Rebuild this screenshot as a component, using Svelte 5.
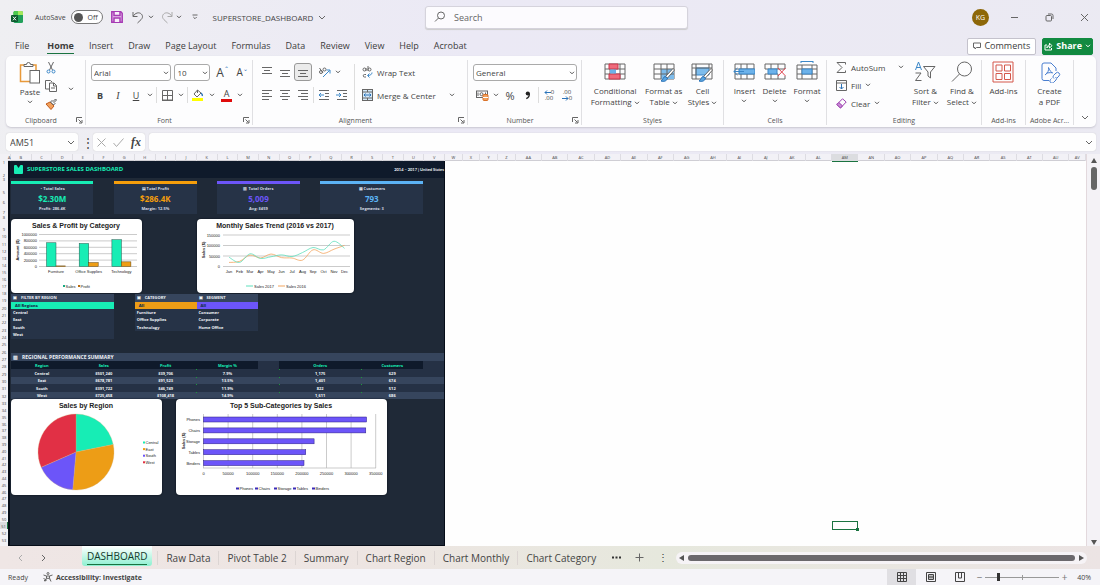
<script>
	const menus = ['File', 'Home', 'Insert', 'Draw', 'Page Layout', 'Formulas', 'Data', 'Review', 'View', 'Help', 'Acrobat'];
	const sheets = ['DASHBOARD', 'Raw Data', 'Pivot Table 2', 'Summary', 'Chart Region', 'Chart Monthly', 'Chart Category'];

	let activeMenu = $state('Home');
	let activeSheet = $state('DASHBOARD');
	let zoom = $state(40);

	const dashCols = 'BCDEFGHIJKLMNOPQRSTUV'.split('');
	const midCols = 'WXYZ'.split('');
	const farCols = 'ABCDEFGHIJKLMNOPQRSTUV'.split('').map((c) => 'A' + c);

	// Row heights in pixels, row 1 first
	const rows = [
		4, 13, 4, 3, 10, 10, 10, 5, 12, 7, 8, 7, 7, 7, 7, 7, 7, 7,
		7, 8, 7, 7, 8, 7, 7, 8, 7, 7, 8, 7, 7, 8,
		7, 7, 7, 7, 6, 7, 7, 7, 7, 6, 7, 7, 7, 7, 6, 7, 7, 7, 7, 7, 7, 3
	];
	const rowTemplate = rows.map((h) => h + 'px').join(' ');

	const kpis = [
		{ name: 'sales', icon: '◔', label: 'Total Sales', value: '$2.30M', note: 'Profit: 286.4K' },
		{ name: 'profit', icon: '▤', label: 'Total Profit', value: '$286.4K', note: 'Margin: 12.5%' },
		{ name: 'orders', icon: '▥', label: 'Total Orders', value: '5,009', note: 'Avg: $459' },
		{ name: 'customers', icon: '▦', label: 'Customers', value: '793', note: 'Segments: 3' }
	];

	const filters = [
		{ name: 'region', title: 'FILTER BY REGION', all: 'All Regions', items: ['Central', 'East', 'South', 'West'] },
		{ name: 'category', title: 'CATEGORY', all: 'All', items: ['Furniture', 'Office Supplies', 'Technology'] },
		{ name: 'segment', title: 'SEGMENT', all: 'All', items: ['Consumer', 'Corporate', 'Home Office'] }
	];

	const regions = [
		['Central', '$501,240', '$39,706', '7.9%', '1,175', '629'],
		['East', '$678,781', '$91,523', '13.5%', '1,401', '674'],
		['South', '$391,722', '$46,749', '11.9%', '822', '512'],
		['West', '$725,458', '$108,418', '14.9%', '1,611', '686']
	];

	const categories = [
		{ name: 'Furniture', sales: 742000, profit: 18451 },
		{ name: 'Office Supplies', sales: 719047, profit: 122491 },
		{ name: 'Technology', sales: 836154, profit: 145455 }
	];

	const months = ['Jan', 'Feb', 'Mar', 'Apr', 'May', 'Jun', 'Jul', 'Aug', 'Sep', 'Oct', 'Nov', 'Dec'];
	const sales2017 = [42, 17, 58, 36, 44, 53, 45, 64, 88, 77, 118, 84];
	const sales2016 = [17, 22, 52, 38, 57, 40, 38, 28, 77, 60, 80, 98];

	const subCategories = [
		['Phones', 330007],
		['Chairs', 328449],
		['Storage', 223844],
		['Tables', 206966],
		['Binders', 203413]
	];

	const shares = [
		{ name: 'Central', value: 501240, color: '#17edb5' },
		{ name: 'East', value: 678781, color: '#ed9d16' },
		{ name: 'South', value: 391722, color: '#6c55f9' },
		{ name: 'West', value: 725458, color: '#e13045' }
	];

	function smooth(values) {
		const pts = values.map((v, i) => [32 + i * 10.5, 47 - v * 0.21]);
		let d = `M${pts[0]}`;
		for (let i = 1; i < pts.length; i++) {
			const a = pts[i - 2] ?? pts[i - 1];
			const b = pts[i - 1];
			const c = pts[i];
			const e = pts[i + 1] ?? c;
			d += `C${b[0] + (c[0] - a[0]) / 6},${b[1] + (c[1] - a[1]) / 6} ${c[0] - (e[0] - b[0]) / 6},${c[1] - (e[1] - b[1]) / 6} ${c[0]},${c[1]}`;
		}
		return d;
	}

	function pieSlices() {
		const total = shares.reduce((sum, s) => sum + s.value, 0);
		let start = 0;
		return shares.map((s) => {
			const end = start + (s.value / total) * Math.PI * 2;
			const p = (a) => `${65 + 38 * Math.sin(a)},${53 - 38 * Math.cos(a)}`;
			const d = `M65,53L${p(start)}A38,38 0 0 1 ${p(end)}Z`;
			start = end;
			return { d, color: s.color };
		});
	}
</script>

{#snippet chevron()}
	<svg class="chev" width="6" height="4" viewBox="0 0 6 4"><path d="M1 .8l2 2 2-2" /></svg>
{/snippet}

{#snippet lines(a, b, c, d)}
	<svg width="12" height="12" viewBox="0 0 12 12" class="line">
		{#each [a, b, c, d] as l, i}
			{#if l}<path d="M{l[0]} {1.5 + i * 3}H{l[1]}" />{/if}
		{/each}
	</svg>
{/snippet}

{#snippet launcher()}
	<button class="launcher" aria-label="More options">
		<svg width="7" height="7" viewBox="0 0 7 7" class="line"><path d="M.5 5V.5H6M2.5 2.5l3 3M6 3v3H3" /></svg>
	</button>
{/snippet}

<div class="app">
	<header class="titlebar">
		<div class="quick">
			<svg class="logo" width="12" height="12" viewBox="0 0 12 12">
				<rect x="2.500" width="9.500" height="12" rx="1.500" fill="#21a05a" />
				<path d="M7 0h3.500A1.500 1.500 0 0 1 12 1.500V4H7z" fill="#a4e85c" />
				<path d="M2.500 1.500A1.500 1.500 0 0 1 4 0h3v4H2.500z" fill="#4cc94e" />
				<rect x="0" y="4" width="7" height="7" rx="1" fill="#0c5a2e" />
				<path d="M2 5.700l3 3.600M5 5.700L2 9.300" stroke="#fff" stroke-width="1" />
			</svg>
			<span class="autosave">AutoSave</span>
			<button class="toggle" aria-label="AutoSave"><i></i>Off</button>
			<button class="save" aria-label="Save">
				<svg width="12" height="12" viewBox="0 0 12 12" fill="none" stroke="#a63bb4" stroke-width="1.500">
					<path d="M.8.8h9l1.400 1.400v9H.8z" fill="#e9c4ee" /><path d="M3 1v3.500h6V1M3 11V7h6v4" fill="#f8eefa" />
				</svg>
			</button>
			<button class="undo" aria-label="Undo">
				<svg width="12" height="13" viewBox="0 0 12 13" class="line"><path d="M1 1v4.500h4.500M1.200 5.200C3 2 7 .7 9.300 3c2 2 1.200 4.200-.3 5.700L5.500 12" /></svg>
			</button>
			{@render chevron()}
			<button class="redo" aria-label="Redo">
				<svg width="12" height="13" viewBox="0 0 12 13" class="line pale"><path d="M11 1v4.500H6.500M10.800 5.200C9 2 5 .7 2.700 3c-2 2-1.200 4.200.3 5.700L6.500 12" /></svg>
			</button>
			{@render chevron()}
			<svg class="customize line" width="6" height="6" viewBox="0 0 6 6"><path d="M.5 1h5M1.300 3L3 4.700 4.700 3" /></svg>
			<span class="filename">SUPERSTORE_DASHBOARD</span>
			<svg class="line" width="8" height="5" viewBox="0 0 8 5"><path d="M1 1l3 3 3-3" /></svg>
		</div>
		<label class="search">
			<svg width="12" height="12" viewBox="0 0 12 12" class="line"><circle cx="7" cy="4.500" r="3.500" /><path d="M4.500 7L1 10.500" /></svg>
			<input type="text" placeholder="Search" aria-label="Search" />
		</label>
		<div class="window">
			<span class="avatar">KG</span>
			<button aria-label="Minimize"><svg width="9" height="9" viewBox="0 0 9 9" class="line"><path d="M1 4.500h7" /></svg></button>
			<button aria-label="Restore"><svg width="9" height="9" viewBox="0 0 9 9" class="line"><rect x="1" y="2.500" width="5.500" height="5.500" rx="1" /><path d="M3 1h3.500A1.500 1.500 0 0 1 8 2.500V6" /></svg></button>
			<button aria-label="Close"><svg width="9" height="9" viewBox="0 0 9 9" class="line"><path d="M1 1l7 7M8 1L1 8" /></svg></button>
		</div>
	</header>

	<nav class="menus">
		{#each menus as menu}
			<button class:active={menu === activeMenu} onclick={() => (activeMenu = menu)}>{menu}</button>
		{/each}
		<span class="grow"></span>
		<button class="comments">
			<svg width="8" height="8" viewBox="0 0 8 8" class="line"><path d="M.5 1h7v4.500h-4L2 7V5.500H.5z" /></svg>
			Comments
		</button>
		<button class="share">
			<svg width="9" height="9" viewBox="0 0 9 9" class="line"><path d="M3 3H1v5h6.500V6M2.800 6C3 4 4 3.200 5.500 3.200V1.200L8 3.700 5.500 6V4.500C4.300 4.500 3.500 5 2.800 6z" /></svg>
			Share
			{@render chevron()}
		</button>
	</nav>

	<section class="ribbon">
		<div class="group">
			<div class="body clipboard">
				<button class="big">
					<svg width="22" height="22" viewBox="0 0 22 22" fill="none">
						<path d="M5 3H1.500v16.500H11M14 3h3v5" stroke="#e8993a" stroke-width="1.500" />
						<path d="M5 4.500V2.500h2.500a2 2 0 0 1 4 0H14v2z" stroke="#666" />
						<rect x="11" y="8.500" width="9.500" height="12.500" stroke="#666" fill="#fff" />
					</svg>
					<span>Paste</span>
					{@render chevron()}
				</button>
				<div class="stack">
					<button aria-label="Cut"><svg width="10" height="12" viewBox="0 0 10 12" class="line"><path d="M2.500 0l4 8M7.500 0l-4 8" /><g stroke="#3b87c8"><circle cx="2.500" cy="9.500" r="1.500" /><circle cx="7.500" cy="9.500" r="1.500" /></g></svg></button>
					<button aria-label="Copy"><svg width="12" height="12" viewBox="0 0 12 12" class="line"><path d="M4 9H.5V.5h5L7 2" /><path d="M4.500 3h4.500l2.500 2.500v6h-7zM8.500 3v3h3M6 8h4" /></svg></button>
					<button aria-label="Format Painter"><svg width="12" height="12" viewBox="0 0 12 12" fill="none"><path d="M1 6l4-2 4 4-3 3.500z" fill="#f3a15c" stroke="#c05a1a" /><path d="M5.500 4L7 2.500l1 1L10.500 1l1 1L9 4.500l1 1L8.500 7z" stroke="#555" fill="#fff" /></svg></button>
				</div>
				<span class="copymore">{@render chevron()}</span>
			</div>
			<footer><span>Clipboard</span>{@render launcher()}</footer>
		</div>

		<div class="group">
			<div class="body two">
				<div class="tools">
					<span class="picker fonts"><select aria-label="Font"><option>Arial</option></select>{@render chevron()}</span>
					<span class="picker size"><select aria-label="Font size"><option>10</option></select>{@render chevron()}</span>
					<button class="tool letter">A<sup>⌃</sup></button>
					<button class="tool letter small">A<sup>⌄</sup></button>
				</div>
				<div class="tools">
					<button class="tool"><b>B</b></button>
					<button class="tool"><i class="serif">I</i></button>
					<button class="tool"><u>U</u></button>
					<span class="arrow">{@render chevron()}</span>
					<span class="sep"></span>
					<button class="tool" aria-label="Borders"><svg width="11" height="11" viewBox="0 0 11 11" class="line"><path d="M.5.5h10v9.500H.5zM5.500.5V10M.5 5.500h10M0 10.500h11" /></svg></button>
					<span class="arrow">{@render chevron()}</span>
					<span class="sep"></span>
					<button class="tool" aria-label="Fill Color"><svg width="12" height="12" viewBox="0 0 12 12" class="line"><path d="M5.500 1L2 5l3 3 4-4zM5.500 1v3" /><path d="M9 4c1.500 1 1.500 2 1.300 3" stroke="#2b73b8" stroke-width="1.500" /><path d="M0 10.500h11" stroke="#ff0" stroke-width="3" /></svg></button>
					<span class="arrow">{@render chevron()}</span>
					<button class="tool fontcolor">A</button>
					<span class="arrow">{@render chevron()}</span>
				</div>
			</div>
			<footer><span>Font</span>{@render launcher()}</footer>
		</div>

		<div class="group">
			<div class="body align">
				<div class="two">
					<div class="tools">
						<button class="tool" aria-label="Top Align">{@render lines([1, 11], [3, 9], [1, 11], null)}</button>
						<button class="tool" aria-label="Middle Align">{@render lines(null, [1, 11], [3, 9], [1, 11])}</button>
						<button class="tool pressed" aria-label="Bottom Align">{@render lines(null, [1, 11], [3, 9], [1, 11])}</button>
						<button class="tool orient" aria-label="Orientation"><svg width="13" height="12" viewBox="0 0 13 12" class="line"><circle cx="3" cy="6" r="1.500" /><path d="M1.500 2l3.500 5" /><circle cx="6.500" cy="3.500" r="1.500" /><path d="M5 11l6.500-6.500M8.500 4h3.500v3.500" stroke="#3b87c8" /></svg></button>
						<span class="arrow">{@render chevron()}</span>
					</div>
					<div class="tools">
						<button class="tool" aria-label="Align Left">{@render lines([1, 11], [1, 8], [1, 11], [1, 8])}</button>
						<button class="tool" aria-label="Center">{@render lines([1, 11], [3, 9], [1, 11], [3, 9])}</button>
						<button class="tool" aria-label="Align Right">{@render lines([1, 11], [4, 11], [1, 11], [4, 11])}</button>
						<span class="sep"></span>
						<button class="tool" aria-label="Decrease Indent"><svg width="12" height="12" viewBox="0 0 12 12" class="line"><path d="M1 1.500h10M7 4.500h4M7 7.500h4M1 10.500h10" /><path d="M6 6H1M3 4L1 6l2 2" stroke="#3b87c8" /></svg></button>
						<button class="tool" aria-label="Increase Indent"><svg width="12" height="12" viewBox="0 0 12 12" class="line"><path d="M1 1.500h10M7 4.500h4M7 7.500h4M1 10.500h10" /><path d="M0 6h5M3 4l2 2-2 2" stroke="#3b87c8" /></svg></button>
					</div>
				</div>
				<span class="sep"></span>
				<div class="two wide">
					<button class="row">
						<svg width="11" height="12" viewBox="0 0 11 12" class="line"><circle cx="2.500" cy="3.500" r="1.500" /><path d="M4 2v3M6 0v5M4 8.500H2.500a1.200 1.200 0 0 0 0 2.500H4" /><circle cx="7.500" cy="3.500" r="1.500" /><path d="M10 6.500c0 2-2 3-4 3M7.500 7.500l-2 2 2 2" stroke="#3b87c8" /></svg>
						Wrap Text
					</button>
					<button class="row">
						<svg width="11" height="12" viewBox="0 0 11 12" class="line"><rect x=".5" y=".5" width="10" height="11" fill="#d5e9f9" /><path d="M.5 3h10M.5 9h10M5.500.5V3M5.500 9v2.500" /><path d="M2 6h7M3.500 4.500L2 6l1.500 1.500M7.500 4.500L9 6 7.500 7.500" stroke="#2b73b8" /></svg>
						Merge &amp; Center <span class="grow"></span>{@render chevron()}
					</button>
				</div>
			</div>
			<footer><span>Alignment</span>{@render launcher()}</footer>
		</div>

		<div class="group">
			<div class="body two">
				<div class="tools">
					<span class="picker format"><select aria-label="Number format"><option>General</option></select>{@render chevron()}</span>
				</div>
				<div class="tools">
					<button class="tool" aria-label="Accounting"><svg width="13" height="11" viewBox="0 0 13 11" class="line"><rect x=".5" y="1" width="11" height="6.500" /><circle cx="5.500" cy="4.200" r="1.500" /><path d="M2 2.500v3.500M9.500 2.500V4" /><rect x="7" y="4.500" width="5" height="6" rx="1" fill="#f3a15c" stroke="#d9722a" /><path d="M7 7.500h5" stroke="#fff" /></svg></button>
					<span class="arrow">{@render chevron()}</span>
					<button class="tool percent">%</button>
					<button class="tool" aria-label="Comma Style"><svg width="6" height="9" viewBox="0 0 6 9"><circle cx="2.800" cy="2.500" r="2.100" fill="#222" /><path d="M4.300 2.500c.3 2.500-1 4.200-3 5.200" fill="none" stroke="#222" stroke-width="1.300" /></svg></button>
					<span class="sep"></span>
					<button class="tool decimal"><span><svg width="7" height="5" viewBox="0 0 7 5"><path d="M7 2.500H1M3 .5l-2 2 2 2" /></svg>0</span><span>.00</span></button>
					<button class="tool decimal"><span>.00</span><span><svg width="7" height="5" viewBox="0 0 7 5"><path d="M0 2.500h6M4 .5l2 2-2 2" /></svg>0</span></button>
				</div>
			</div>
			<footer><span>Number</span>{@render launcher()}</footer>
		</div>

		<div class="group">
			<div class="body styles">
				<button class="big">
					<svg width="22" height="22" viewBox="0 0 22 22" class="line"><path d="M1 3h20v15H1zM1 8h20M1 13h20M6 3v15M11 3v15M16 3v15" /><path d="M5 3h9v5H5zM5 13h11v5H5z" fill="#ee6b7c" stroke="#c9374c" /><path d="M6 8.500h6v4H6z" fill="#6cb2ea" stroke="none" /></svg>
					<span>Conditional</span><span>Formatting {@render chevron()}</span>
				</button>
				<button class="big">
					<svg width="22" height="22" viewBox="0 0 22 22" class="line"><path d="M1 3h20v15H1z" /><path d="M8 8h13v10H8z" fill="#7dbcec" stroke="none" /><path d="M1 8h20M1 13h20M8 3v15M14 3v15" /><path d="M20 7.500l-7.500 8 2 1.500L21.500 9z" fill="#fff" /><path d="M12 15.500c-2 .5-1.500 3-4 4.500 3 1 6 0 6.500-3z" fill="#5aa5e0" stroke="#2b73b8" /></svg>
					<span>Format as</span><span>Table {@render chevron()}</span>
				</button>
				<button class="big">
					<svg width="22" height="22" viewBox="0 0 22 22" class="line"><path d="M1 3h20v15H1z" /><path d="M5 7h13v7H5z" fill="#7dbcec" stroke="#3b87c8" /><path d="M1 7h20M5 3v15M18 3v4M1 14h4" /><path d="M20 7.500l-7.500 8 2 1.500L21.500 9z" fill="#fff" /><path d="M12 15.500c-2 .5-1.500 3-4 4.500 3 1 6 0 6.500-3z" fill="#5aa5e0" stroke="#2b73b8" /></svg>
					<span>Cell</span><span>Styles {@render chevron()}</span>
				</button>
			</div>
			<footer><span>Styles</span></footer>
		</div>

		<div class="group">
			<div class="body cells">
				<button class="big">
					<svg width="22" height="22" viewBox="0 0 22 22" class="line"><path d="M2 3h19v15H2zM2 8h19M2 13h19M8 3v15M14 3v15" /><path d="M6 8h16v5H6z" fill="#6cb2ea" stroke="#3b87c8" /><path d="M11 10.500H.8M4.500 7l-3.700 3.500L4.500 14" stroke="#3b87c8" /></svg>
					<span>Insert</span>{@render chevron()}
				</button>
				<button class="big">
					<svg width="22" height="22" viewBox="0 0 22 22" class="line"><path d="M1 8V3h20v5M1 13v5h20v-3M1 8h20M1 13h13M7 3v5M14 3v5M7 13v5M14 13v5" /><path d="M4 8h9v5H4z" fill="#6cb2ea" stroke="#3b87c8" /><path d="M14 7l7.500 8M21.500 7L14 15" stroke="#e0434f" /></svg>
					<span>Delete</span>{@render chevron()}
				</button>
				<button class="big">
					<svg width="22" height="22" viewBox="0 0 22 22" class="line"><path d="M1 4h20v14H1zM1 8h20M1 13h20M6 4v14M16 4v14" /><path d="M6 8h10v5H6z" fill="#6cb2ea" stroke="#3b87c8" /><path d="M5 .5h12M5 0v2M17 0v2" stroke="#3b87c8" /></svg>
					<span>Format</span>{@render chevron()}
				</button>
			</div>
			<footer><span>Cells</span></footer>
		</div>

		<div class="group">
			<div class="body editing">
				<div class="edits">
					<button class="row"><svg width="11" height="11" viewBox="0 0 11 11" class="line"><path d="M9.500 2.500V.5H1l5 5-5 5h8.500v-2" /></svg>AutoSum<span class="grow"></span>{@render chevron()}</button>
					<button class="row"><svg width="11" height="11" viewBox="0 0 11 11" class="line"><path d="M.5.500h10v10H.5zM.5 3h10" /><path d="M5.500 4v5M3.500 7l2 2 2-2" stroke="#2b73b8" /></svg>Fill {@render chevron()}</button>
					<button class="row"><svg width="11" height="11" viewBox="0 0 11 11" fill="none" stroke="#9b3fae"><path d="M.8 6.500L6.500.800l3.700 3.200-5.700 6z" /><path d="M.8 6.500l2-2 3.700 3.300-2 2.200z" fill="#c98bd6" /></svg>Clear {@render chevron()}</button>
				</div>
				<button class="big">
					<svg width="22" height="22" viewBox="0 0 22 22" class="line"><path d="M1.500 9L4.500 1l3 8M2.500 6.500h4" stroke="#3b87c8" /><path d="M1.500 12H7l-5.500 7.500H7.500M9.500 5.500h11.500l-4.500 5.500v6l-2.500-2v-4z" /></svg>
					<span>Sort &amp;</span><span>Filter {@render chevron()}</span>
				</button>
				<button class="big">
					<svg width="22" height="22" viewBox="0 0 22 22" class="line"><circle cx="13.500" cy="8" r="7" /><path d="M8.500 13L1 20.500" /></svg>
					<span>Find &amp;</span><span>Select {@render chevron()}</span>
				</button>
			</div>
			<footer><span>Editing</span></footer>
		</div>

		<div class="group">
			<div class="body single">
				<button class="big">
					<svg width="22" height="22" viewBox="0 0 22 22" fill="none" stroke="#d4574a"><path d="M1 1h20v20H1zM4 4h6v6H4zM12.500 4h6v6h-6zM4 12.500h6v6H4zM12.500 12.500h6v6h-6z" /></svg>
					<span>Add-ins</span>
				</button>
			</div>
			<footer><span>Add-ins</span></footer>
		</div>

		<div class="group">
			<div class="body single">
				<button class="big">
					<svg width="22" height="22" viewBox="0 0 22 22" fill="none" stroke="#4a7fd0"><path d="M10 19.500H5a2 2 0 0 1-2-2V4a2 2 0 0 1 2-2h7l5 5v3" /><path d="M6 14c3-2 4-5 3.500-7.500C11 10 12.500 12 14 12M7 12.500c2-.8 4-1 6-.8" /><path d="M12.500 17.500l-1 1a2 2 0 0 0 3 3l2.500-2.500a2 2 0 0 0-.5-3M18 17l2-2a2 2 0 0 0-3-3L14.500 14.500a2 2 0 0 0 .5 3" /></svg>
					<span>Create</span><span>a PDF</span>
				</button>
			</div>
			<footer><span>Adobe Acr...</span></footer>
		</div>

		<button class="collapse" aria-label="Collapse ribbon"><svg width="8" height="5" viewBox="0 0 8 5" class="line"><path d="M1 1l3 3 3-3" /></svg></button>
	</section>

	<div class="formulabar">
		<div class="namebox">
			<input value="AM51" aria-label="Name Box" />
			<svg width="8" height="5" viewBox="0 0 8 5" class="line"><path d="M1 1l3 3 3-3" /></svg>
		</div>
		<span class="dots">⋮</span>
		<div class="fx">
			<svg width="9" height="9" viewBox="0 0 9 9" class="line pale"><path d="M.5.5l8 8M8.500.5l-8 8" /></svg>
			<svg width="11" height="9" viewBox="0 0 11 9" class="line pale"><path d="M.5 5l3 3.500 7-8" /></svg>
			<em>fx</em>
		</div>
		<div class="formula">
			<input value="" aria-label="Formula" />
			<svg width="8" height="5" viewBox="0 0 8 5" class="line"><path d="M1 1l3 3 3-3" /></svg>
		</div>
	</div>

	<main class="sheet">
		<div class="rowheads">
			<span class="corner"></span>
			{#each rows as h, i}
				<span class:picked={i === 50} style:height="{h}px">{h > 3 ? i + 1 : ''}</span>
			{/each}
		</div>

		<div class="left">
			<div class="colheads">
				<span class="a">A</span>
				{#each dashCols as c}<span>{c}</span>{/each}
			</div>
			<div class="dashboard">
				<header>
					<svg width="9" height="9" viewBox="0 0 9 9"><rect width="9" height="9" rx="1" fill="#17edb5" /><path d="M2.500 0l2 3 2-3" fill="#0f1a2b" /></svg>
					<h1>SUPERSTORE SALES DASHBOARD</h1>
					<span>2014 – 2017 | United States</span>
				</header>

				<div class="kpis">
					{#each kpis as k}
						<div class="kpi {k.name}">
							<small>{k.icon} {k.label}</small>
							<strong>{k.value}</strong>
							<small>{k.note}</small>
						</div>
					{/each}
				</div>

				<div class="charts top">
					<svg class="chart" width="131" height="74" viewBox="0 0 131 74">
						<text class="title" x="65" y="9">Sales &amp; Profit by Category</text>
						<text class="axis" text-anchor="middle" transform="translate(8 31) rotate(-90)">Amount ($)</text>
						{#each [0, 1, 2, 3, 4, 5] as t}
							<path class="rule" d="M28 {47.5 - t * 6.4}h98" />
							<text x="26" y={49 - t * 6.4} text-anchor="end">{t * 200000}</text>
						{/each}
						{#each categories as c, i}
							<rect x={35.5 + i * 32.7} y={47.5 - c.sales / 31250} width="9.500" height={c.sales / 31250} fill="#17edb5" stroke="#22584d" stroke-width=".5" />
							<rect x={45 + i * 32.7} y={47.5 - c.profit / 31250} width="9.500" height={c.profit / 31250} fill="#ed9d16" stroke="#5e4312" stroke-width=".5" />
							<text x={45 + i * 32.7} y="53.500" text-anchor="middle">{c.name}</text>
						{/each}
						<rect x="52" y="66" width="2" height="2" fill="#17a884" /><text x="54.500" y="68.500">Sales</text>
						<rect x="67" y="66" width="2" height="2" fill="#b86c10" /><text x="69.500" y="68.500">Profit</text>
					</svg>

					<svg class="chart" width="157" height="74" viewBox="0 0 157 74">
						<text class="title" x="78" y="9">Monthly Sales Trend (2016 vs 2017)</text>
						<text class="axis" text-anchor="middle" transform="translate(8 31) rotate(-90)">Sales ($)</text>
						{#each [0, 1, 2, 3] as t}
							<path class="rule" d="M26 {47.5 - t * 10.5}h127" />
							<text x="23" y={49 - t * 10.5} text-anchor="end">{t * 50000}</text>
						{/each}
						{#each months as m, i}
							<text x={32 + i * 10.5} y="53.500" text-anchor="middle">{m}</text>
						{/each}
						<path d={smooth(sales2016)} fill="none" stroke="#f2a55e" stroke-width=".8" />
						<path d={smooth(sales2017)} fill="none" stroke="#5fe0bd" stroke-width=".8" />
						<path d="M49 67h7" stroke="#5fe0bd" /><text x="57" y="68.500">Sales 2017</text>
						<path d="M81 67h7" stroke="#f2a55e" /><text x="89" y="68.500">Sales 2016</text>
					</svg>
				</div>

				<div class="filters">
					{#each filters as f}
						<div class="filter {f.name}">
							<h2><span>▣</span>{f.title}</h2>
							<b>{f.all}</b>
							{#each f.items as item}<p>{item}</p>{/each}
						</div>
					{/each}
				</div>

				<h3><span>▥</span>REGIONAL PERFORMANCE SUMMARY</h3>
				<table>
					<thead>
						<tr>
							<th colspan="3">Region</th><th colspan="3">Sales</th><th colspan="3">Profit</th><th colspan="3">Margin %</th>
							<td></td>
							<th colspan="4">Orders</th><th colspan="3">Customers</th>
							<td></td>
						</tr>
					</thead>
					<tbody>
						{#each regions as r}
							<tr>
								<td colspan="3">{r[0]}</td><td colspan="3">{r[1]}</td><td colspan="3">{r[2]}</td><td colspan="3" class="flag">{r[3]}</td>
								<td></td>
								<td colspan="4" class="flag">{r[4]}</td><td colspan="3" class="flag">{r[5]}</td>
								<td></td>
							</tr>
						{/each}
					</tbody>
				</table>

				<div class="charts bottom">
					<svg class="chart" width="151" height="96" viewBox="0 0 151 96">
						<text class="title" x="75" y="9">Sales by Region</text>
						{#each pieSlices() as s}
							<path d={s.d} fill={s.color} stroke="#d7b27a" stroke-width=".3" />
						{/each}
						{#each shares as s, i}
							<rect x="132" y={42.5 + i * 6.6} width="2" height="2" fill={s.color} />
							<text x="134.500" y={45 + i * 6.6}>{s.name}</text>
						{/each}
					</svg>

					<svg class="chart" width="211" height="96" viewBox="0 0 211 96">
						<text class="title" x="105" y="9">Top 5 Sub-Categories by Sales</text>
						<text class="axis" text-anchor="middle" transform="translate(9 42) rotate(-90)">Sales ($)</text>
						{#each [0, 1, 2, 3, 4, 5, 6, 7] as t}
							<path class="rule" d="M{27.5 + t * 24.6} 15v54" />
							<text x={27.5 + t * 24.6} y="75.500" text-anchor="middle">{t * 50000}</text>
						{/each}
						<path class="rule" d="M27 69h173" />
						{#each subCategories as [name, value], i}
							<rect x="27.500" y={18 + i * 10.9} width={value / 2024} height="5" fill="#6c55f9" stroke="#2b1f80" stroke-width=".5" />
							<text x="24" y={22 + i * 10.9} text-anchor="end">{name}</text>
							<rect x={60 + i * 19} y="88.500" width="3" height="2" fill="#3a2ab8" />
							<text x={63.5 + i * 19} y="91">{name}</text>
						{/each}
					</svg>
				</div>
			</div>
		</div>

		<div class="right">
			<div class="colheads">
				{#each midCols as c}<span>{c}</span>{/each}
				{#each farCols as c}<span class:picked={c === 'AM'}>{c}</span>{/each}
			</div>
			<div class="cellgrid" style:grid-template-rows={rowTemplate}><span class="cursor"></span></div>
		</div>

		<div class="vscroll">
			<svg width="6" height="5" viewBox="0 0 6 5"><path d="M3 0l3 5H0z" /></svg>
			<i></i>
			<span class="grow"></span>
			<svg width="6" height="5" viewBox="0 0 6 5"><path d="M0 0h6L3 5z" /></svg>
		</div>
	</main>

	<nav class="tabs">
		<button class="step pale" aria-label="Previous sheet"><svg width="5" height="8" viewBox="0 0 5 8" class="line"><path d="M4 1L1 4l3 3" /></svg></button>
		<button class="step" aria-label="Next sheet"><svg width="5" height="8" viewBox="0 0 5 8" class="line"><path d="M1 1l3 3-3 3" /></svg></button>
		<div class="names">
			{#each sheets as s}
				<button class:current={s === activeSheet} onclick={() => (activeSheet = s)}><span>{s}</span></button>
			{/each}
		</div>
		<button class="more" aria-label="More sheets"><svg width="9" height="3" viewBox="0 0 9 3" fill="#333"><path d="M0 .5h2v2H0zM3.500.5h2v2h-2zM7 .5h2v2H7z" /></svg></button>
		<button class="more" aria-label="New sheet"><svg width="9" height="9" viewBox="0 0 9 9" class="line"><path d="M4.500.5v8M.5 4.500h8" /></svg></button>
		<span class="more">⋮</span>
		<div class="hscroll">
			<svg width="5" height="6" viewBox="0 0 5 6"><path d="M5 0v6L0 3z" /></svg>
			<i></i>
			<svg width="5" height="6" viewBox="0 0 5 6"><path d="M0 0v6l5-3z" /></svg>
		</div>
	</nav>

	<footer class="status">
		<span>Ready</span>
		<svg width="10" height="10" viewBox="0 0 10 10" class="line"><circle cx="5" cy="1.500" r="1" /><path d="M.5 3l3 1v2L2 9.500M9.500 3l-3 1v2L8 9.500M3.500 4h3M3.500 7L5 6l1.500 1M.5 6l3 3M1 9l2-2" /></svg>
		<b>Accessibility: Investigate</b>
		<span class="grow"></span>
		<button class="view on" aria-label="Normal"><svg width="10" height="10" viewBox="0 0 10 10" class="line dark"><path d="M.5.5h9v9h-9zM.5 3.500h9M.5 6.500h9M3.500.5v9M6.500.5v9" /></svg></button>
		<button class="view" aria-label="Page Layout"><svg width="10" height="10" viewBox="0 0 10 10" class="line dark"><path d="M.5.5h9v9h-9zM2.500 2.500h5v5h-5zM2.500 4.200h5M2.500 5.800h5" /></svg></button>
		<button class="view" aria-label="Page Break Preview"><svg width="10" height="10" viewBox="0 0 10 10" class="line dark"><path d="M.5.5h9v9h-9zM3.500.5V6M6.500.5V6H3.500" /></svg></button>
		<span class="sign">−</span>
		<input type="range" min="10" max="190" bind:value={zoom} aria-label="Zoom" />
		<span class="sign">+</span>
		<span class="level">{zoom}%</span>
	</footer>
</div>

<style>
	:global(body) {
		background: #ebeaf3;
	}

	.app {
		display: flex;
		flex-direction: column;
		min-height: 100vh;
		font-family: 'Open Sans', 'Noto Sans', sans-serif;
		font-size: 8px;
		line-height: 11px;
		color: #444;
		background: linear-gradient(100deg, #efeff2 0, #ebe9f5 40%, #ebeaf2 100%);
		overflow: hidden;
	}

	button,
	input,
	select {
		font: inherit;
		color: inherit;
		background: none;
		border: 0;
		padding: 0;
		margin: 0;
	}

	svg {
		flex: none;
		display: block;
	}

	.line {
		fill: none;
		stroke: #666;
	}

	.line.pale,
	.pale .line {
		stroke: #aaa;
	}

	.line.dark {
		stroke: #444;
	}

	.chev {
		fill: none;
		stroke: #555;
	}

	.grow {
		flex: 1;
	}

	/* Title bar */
	.titlebar {
		display: grid;
		grid-template-columns: 425fr 263fr 412fr;
		align-items: center;
		height: 34px;
	}

	.quick {
		display: flex;
		align-items: center;
		padding-left: 11px;
		font-size: 7px;
	}

	.autosave {
		margin: 0 5px 0 12px;
	}

	.toggle {
		display: flex;
		align-items: center;
		gap: 5px;
		width: 32px;
		height: 14px;
		padding-left: 2px;
		border: 1px solid #777;
		border-radius: 7px;
		background: #fff;
		margin-right: 8px;
	}

	.toggle i {
		width: 9px;
		height: 9px;
		border-radius: 50%;
		background: #555;
	}

	.undo {
		margin: 0 4px 0 9px;
	}

	.redo {
		margin: 0 3px 0 7px;
	}

	.customize {
		margin: 0 15px 0 10px;
	}

	.filename {
		font-size: 8px;
		margin-right: 5px;
	}

	.search {
		display: flex;
		align-items: center;
		gap: 8px;
		height: 23px;
		padding-left: 8px;
		border: 1px solid #d5d3dc;
		border-radius: 3px;
		background: #fcfbfe;
		box-sizing: border-box;
		box-shadow: 0 1px 1px #ccc;
	}

	.search input {
		flex: 1;
		min-width: 0;
		font-size: 9px;
	}

	.search input::placeholder {
		color: #666;
	}

	.window {
		display: flex;
		align-items: center;
		justify-content: flex-end;
		gap: 26px;
		padding-right: 11px;
	}

	.avatar {
		width: 17px;
		height: 17px;
		border-radius: 50%;
		background: #8d6708;
		color: #fff;
		font-size: 7px;
		line-height: 17px;
		text-align: center;
		margin-right: -5px;
	}

	/* Menu row */
	.menus {
		display: flex;
		align-items: center;
		gap: 15px;
		height: 20px;
		padding: 2px 7px 0 15px;
		font-size: 9px;
	}

	.menus button {
		line-height: 14px;
		border-bottom: 1px solid transparent;
		color: #3c3c3c;
	}

	.menus button.active {
		font-weight: 700;
		border-color: #1a7340;
		margin-left: 3px;
	}

	.menus .comments,
	.menus .share {
		display: flex;
		align-items: center;
		gap: 3px;
		height: 17px;
		padding: 0 5px;
		border: 1px solid #c4c2cc;
		border-radius: 2px;
		background: #fff;
	}

	.menus .share {
		background: #128a41;
		border-color: #128a41;
		color: #fff;
		font-weight: 700;
		margin-left: -9px;
		padding: 0 1px;
	}

	.share svg {
		stroke: #fff;
	}

	/* Ribbon */
	.ribbon {
		display: grid;
		grid-template-columns: 80fr 167fr 215fr 114fr 142fr 103fr 155fr 44fr 48fr 22fr;
		height: 71px;
		margin: 0 4px 0 6px;
		border-radius: 5px;
		background: #fdfdfe;
		box-shadow: 0 1px 2px #c8c6d0;
	}

	.group {
		display: flex;
		flex-direction: column;
		min-width: 0;
		margin: 4px 0 2px;
		border-right: 1px solid #e0e0e3;
	}

	.group footer {
		display: flex;
		align-items: center;
		height: 9px;
		font-size: 7px;
		line-height: 9px;
		color: #555;
		white-space: nowrap;
	}

	.group footer span {
		flex: 1;
		text-align: center;
	}

	.launcher {
		width: 9px;
	}

	.body {
		flex: 1;
		display: flex;
		min-height: 0;
		padding: 1px 0 0 5px;
	}

	.two {
		display: flex;
		flex-direction: column;
		gap: 5px;
		padding-top: 2px;
	}

	.body.two {
		padding-top: 3px;
	}

	.tools {
		display: flex;
		align-items: center;
		height: 18px;
	}

	.tool {
		width: 18px;
		height: 18px;
		display: flex;
		align-items: center;
		justify-content: center;
		font-size: 9px;
	}

	.serif {
		font-family: 'Liberation Serif', serif;
		font-size: 10px;
	}

	.arrow {
		width: 10px;
		display: flex;
		justify-content: center;
	}

	.sep {
		width: 1px;
		height: 16px;
		margin: 0 1px;
		background: #ddd;
	}

	.pressed {
		border: 1px solid #999;
		border-radius: 3px;
		background: #ebebeb;
	}

	.orient {
		margin-left: 3px;
	}

	.letter {
		font-size: 12px;
		width: 20px;
	}

	.letter.small {
		font-size: 10px;
	}

	.letter sup {
		font-size: 6px;
		line-height: 6px;
		color: #2b73b8;
		align-self: flex-start;
		padding-top: 3px;
	}

	.fontcolor {
		line-height: 9px;
		height: 13px;
		border-bottom: 3px solid #e00b0b;
		width: 11px;
		margin: 0 3px 0 4px;
	}

	.percent {
		font-size: 11px;
	}

	.decimal {
		flex-direction: column;
		font-size: 6px;
		line-height: 6px;
	}

	.decimal span {
		display: flex;
		align-items: center;
	}

	.decimal svg {
		fill: none;
		stroke: #2b73b8;
	}

	.picker {
		position: relative;
		display: flex;
		height: 17px;
		box-sizing: border-box;
		border: 1px solid #aaa;
		border-radius: 3px;
		background: #fff;
		margin-right: 3px;
	}

	.picker select {
		width: 100%;
		padding-left: 2px;
		appearance: none;
	}

	.picker .chev {
		position: absolute;
		right: 1px;
		top: 6px;
		pointer-events: none;
	}

	.fonts {
		width: 82px;
	}

	.size {
		width: 36px;
	}

	.format {
		width: 104px;
	}

	.big {
		display: flex;
		flex-direction: column;
		align-items: center;
		justify-content: flex-start;
		white-space: nowrap;
	}

	.big svg:first-child {
		margin-bottom: 2px;
	}

	.big span .chev {
		display: inline-block;
		vertical-align: middle;
		margin: 0;
	}

	.big > .chev {
		margin-top: 3px;
	}

	.clipboard {
		align-items: flex-start;
		gap: 4px;
		padding: 2px 0 0 13px;
	}

	.stack {
		display: flex;
		flex-direction: column;
		gap: 6px;
	}

	.stack svg {
		margin: auto;
	}

	.copymore {
		align-self: center;
		padding-left: 7px;
	}

	.align .sep {
		height: 46px;
		margin: 3px 7px 0 3px;
	}

	.align .tools .sep {
		height: 16px;
		margin: 0 1px;
	}

	.wide {
		flex: 1;
		padding-right: 12px;
	}

	.row {
		display: flex;
		align-items: center;
		gap: 4px;
		height: 18px;
		white-space: nowrap;
	}

	.styles {
		justify-content: space-around;
		padding: 1px 3px 0 6px;
	}

	.cells {
		justify-content: space-around;
		padding: 1px 2px 0 6px;
	}

	.single {
		justify-content: center;
		padding: 1px 0 0;
	}

	.editing {
		gap: 8px;
		padding: 0 0 0 9px;
	}

	.editing .big {
		padding-top: 1px;
	}

	.edits {
		flex: none;
		width: 68px;
		margin-top: -2px;
	}

	.edits .row {
		width: 100%;
	}

	.collapse {
		align-self: end;
		justify-self: center;
		padding-bottom: 7px;
	}

	/* Formula bar */
	.formulabar {
		display: flex;
		align-items: center;
		gap: 4px;
		height: 18px;
		padding: 6px 4px 3px 6px;
	}

	.namebox,
	.fx,
	.formula {
		display: flex;
		align-items: center;
		height: 18px;
		border-radius: 3px;
		background: #fefefe;
		box-shadow: 0 0 1px #bbb;
	}

	.namebox {
		width: 72px;
	}

	.namebox input,
	.formula input {
		flex: 1;
		min-width: 0;
		padding-left: 4px;
		font-size: 9px;
	}

	.namebox svg,
	.formula svg {
		margin: 0 3px;
	}

	.dots {
		width: 7px;
		text-align: center;
		font-size: 12px;
	}

	.fx {
		width: 48px;
		gap: 7px;
		padding-left: 4px;
	}

	.fx em {
		font-family: 'Liberation Serif', serif;
		font-weight: 700;
		font-size: 12px;
	}

	.formula {
		flex: 1;
	}

	/* Worksheet */
	.sheet {
		flex: 1;
		display: grid;
		grid-template-columns: 8px 437px 1fr 13px;
		font-size: 4px;
		line-height: 5px;
	}

	.rowheads {
		display: flex;
		flex-direction: column;
		background: #f2f1f5;
	}

	.rowheads span {
		display: flex;
		align-items: flex-end;
		justify-content: center;
		overflow: hidden;
		flex: none;
	}

	.rowheads .corner {
		height: 7px;
	}

	.rowheads .picked {
		background: #dcdcdf;
		border-right: 1px solid #1a7340;
	}

	.colheads {
		display: grid;
		height: 7px;
		box-sizing: border-box;
		border-bottom: 1px solid #cfced4;
		background: #f2f1f6;
		text-align: center;
		line-height: 7px;
	}

	.left .colheads {
		grid-template-columns: 3px repeat(21, 1fr);
	}

	.right .colheads,
	.cellgrid {
		display: grid;
		grid-template-columns: repeat(4, 177fr) repeat(21, 264fr) 166fr;
	}

	.colheads span {
		border-right: 1px solid #dddce2;
		min-width: 0;
	}

	.colheads .picked {
		background: #dcdde0;
		box-shadow: 0 1px #1a7340;
	}

	.right {
		display: flex;
		flex-direction: column;
		min-width: 0;
		background: #fefefe;
		border-right: 1px solid #e3d9dd;
	}

	.cursor {
		grid-area: 51 / 17;
		border: 1px solid #1a7340;
		margin: -1px 0;
		position: relative;
	}

	.cursor::after {
		content: '';
		position: absolute;
		right: -2px;
		bottom: -2px;
		width: 3px;
		height: 3px;
		background: #1a7340;
	}

	.left {
		display: flex;
		flex-direction: column;
	}

	.dashboard {
		flex: 1;
		background: #1f2937;
		color: #eef2f6;
		border: solid #060d18;
		border-width: 0 1px 1px 2px;
		padding-left: 1px;
	}

	.dashboard header {
		display: flex;
		align-items: center;
		gap: 4px;
		height: 17px;
		margin-left: -1px;
		padding-left: 4px;
		background: #0f1a2b;
		white-space: nowrap;
	}

	.dashboard h1 {
		flex: 1;
		margin: 0;
		font-size: 6px;
		font-weight: 700;
		color: #17edb5;
	}

	.dashboard header span {
		font-family: Lato, 'Open Sans', sans-serif;
		font-weight: 700;
	}

	.kpis,
	.filters {
		display: grid;
		grid-template-columns: repeat(21, 1fr);
	}

	.kpis {
		margin: 3px 0 5px;
	}

	.kpi {
		display: flex;
		flex-direction: column;
		justify-content: space-between;
		align-items: center;
		height: 25px;
		padding: 2px 0 3px;
		border-top: 3px solid;
		background: #263347;
		grid-column: span 4;
	}

	.kpi small {
		font-size: 4px;
		font-weight: 700;
		color: #d5dbe3;
	}

	.kpi strong {
		font-size: 8px;
		line-height: 10px;
	}

	.kpi.sales {
		color: #17edb5;
	}

	.kpi.profit {
		grid-column: 6 / span 4;
		color: #f59e0b;
	}

	.kpi.orders {
		grid-column: 11 / span 4;
		color: #6c55f9;
	}

	.kpi.customers {
		grid-column: 16 / span 5;
		color: #5cb3f5;
	}

	.charts {
		display: flex;
		gap: 55px;
	}

	.charts.bottom {
		gap: 14px;
	}

	.chart {
		background: #fff;
		border-radius: 4px;
		box-shadow: 0 0 2px #050b15;
		font-family: 'Liberation Sans', Arial, sans-serif;
		font-size: 4px;
		fill: #222;
	}

	.chart .title {
		font-size: 7px;
		font-weight: 700;
		text-anchor: middle;
	}

	.chart .axis {
		font-weight: 700;
	}

	.chart .rule {
		stroke: #b5b5b5;
		stroke-width: 0.7;
	}

	.filters {
		align-items: start;
		height: 45px;
		margin: 1px 0 14px;
		font-weight: 700;
		line-height: 7px;
	}

	.filter {
		background: #263347;
		grid-column: span 3;
	}

	.filter.region {
		grid-column: span 5;
	}

	.filter.category {
		grid-column: 7 / span 3;
	}

	.filter h2,
	h3 {
		display: flex;
		gap: 4px;
		height: 8px;
		margin: 0;
		padding-left: 2px;
		font-size: 4px;
		line-height: 8px;
		background: #36455d;
	}

	h3 {
		font-size: 5px;
	}

	.filter b {
		display: block;
		height: 7px;
		padding-left: 4px;
		color: #15314a;
		background: #17edb5;
	}

	.filter.category b {
		background: #ed9d16;
	}

	.filter.segment b {
		background: #6c55f9;
	}

	.filter p {
		margin: 0;
		padding-left: 2px;
		line-height: 7px;
	}

	.filter p:nth-child(even) {
		line-height: 8px;
	}

	table {
		width: 100%;
		table-layout: fixed;
		border-collapse: collapse;
		text-align: center;
		font-weight: 700;
		line-height: 7px;
	}

	th,
	td {
		padding: 0;
		height: 7px;
	}

	thead th {
		height: 8px;
		background: #0f1a2b;
		color: #17edb5;
	}

	tbody tr,
	thead td {
		background: #253145;
	}

	tbody tr:nth-child(even) {
		background: #36455d;
	}

	tbody tr:nth-child(odd) td {
		height: 8px;
	}

	.flag {
		background: linear-gradient(135deg, #1c9a3a 1px, transparent 1px);
	}

	.vscroll {
		display: flex;
		flex-direction: column;
		align-items: center;
		gap: 4px;
		padding: 0 0 1px;
		background: #f4f2f6;
		fill: #555;
	}

	.vscroll svg:first-child {
		margin-top: 4px;
	}

	.vscroll i {
		width: 6px;
		height: 23px;
		border-radius: 3px;
		background: #666;
	}

	/* Sheet tabs */
	.tabs {
		display: flex;
		align-items: center;
		height: 23px;
		background: linear-gradient(90deg, #efe6e5 0, #ede5e2 35%, #e6e8dd 60%, #ece4e4 100%);
		padding-right: 13px;
		font-size: 10px;
	}

	.step {
		width: 23px;
		display: flex;
		justify-content: center;
	}

	.step:first-child {
		margin-left: 9px;
	}

	.names {
		display: flex;
		align-items: center;
		height: 23px;
		margin-left: 27px;
	}

	.names button {
		height: 14px;
		padding: 0 8px;
		border-left: 1px solid #dcd5d3;
		line-height: 14px;
		white-space: nowrap;
	}

	.names .current {
		align-self: flex-start;
		height: 20px;
		padding: 1px 5px 0;
		border: 0;
		border-radius: 0 0 3px 3px;
		margin-right: 5px;
		color: #143a2c;
		background: linear-gradient(#fff, #8df0d0);
	}

	.current span {
		display: block;
		line-height: 16px;
		border-bottom: 1px solid #1a7340;
	}

	.names + .more {
		margin-left: 1px;
	}

	.more {
		width: 23px;
		display: flex;
		justify-content: center;
		color: #333;
	}

	.hscroll {
		flex: 1;
		display: flex;
		align-items: center;
		gap: 4px;
		height: 12px;
		margin-left: 2px;
		padding: 0 3px;
		border-radius: 6px;
		background: #f6f3f6;
		fill: #555;
	}

	.hscroll i {
		flex: 1;
		height: 6px;
		border-radius: 3px;
		background: #6b686c;
	}

	/* Status bar */
	.status {
		display: flex;
		align-items: center;
		height: 16px;
		padding: 0 9px 0 8px;
		background: #f5f4f8;
		font-size: 7px;
	}

	.status > svg {
		margin: 0 3px 0 15px;
	}

	.view {
		width: 29px;
		height: 16px;
		display: flex;
		align-items: center;
		justify-content: center;
	}

	.view.on {
		background: #e0dfe3;
	}

	.sign {
		width: 11px;
		text-align: center;
		font-size: 10px;
		color: #777;
	}

	.status input {
		width: 74px;
		height: 9px;
		appearance: none;
		background:
			linear-gradient(#999, #999) center / 100% 1px no-repeat,
			linear-gradient(#999, #999) center / 1px 5px no-repeat;
	}

	.status input::-webkit-slider-thumb {
		appearance: none;
		width: 3px;
		height: 8px;
		background: #333;
	}

	.level {
		margin-left: 7px;
	}
</style>
